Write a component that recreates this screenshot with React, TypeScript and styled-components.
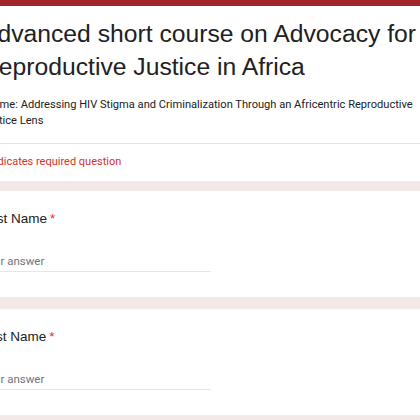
import styled, { createGlobalStyle } from 'styled-components';

const GlobalStyle = createGlobalStyle`
  html, body {
    margin: 0;
    padding: 0;
    background: #f3e9e9;
    overflow: hidden;
  }
`;

const FormColumn = styled.div`
  width: 496px;
  margin-left: -37px;
  display: flex;
  flex-direction: column;
`;

const Card = styled.div<{ $header?: boolean }>`
  background: #ffffff;
  margin-bottom: ${(p) => (p.$header ? '10px' : '12px')};
  border-top: ${(p) => (p.$header ? '6px solid #a1262b' : 'none')};
`;

const HeaderTop = styled.div`
  padding: 11px 18px 14px;
`;

const Title = styled.h1`
  margin: 0;
  font-family: 'Liberation Sans', Arial, sans-serif;
  font-weight: 400;
  font-size: 24.7px;
  line-height: 33px;
  color: #202124;
`;

const Description = styled.p`
  margin: 14px 0 0;
  font-family: Roboto, 'Noto Sans', sans-serif;
  font-size: 11.1px;
  line-height: 16px;
  color: #202124;
`;

const RequiredNote = styled.div`
  border-top: 1px solid #e3e3e3;
  padding: 10px 18px 12px;
  font-family: Roboto, 'Noto Sans', sans-serif;
  font-size: 11px;
  line-height: 15px;
  color: #d93025;
`;

const Question = styled.div`
  padding: 19px 18px 0;
  height: 87px;
`;

const Label = styled.div`
  font-family: 'Liberation Sans', Arial, sans-serif;
  font-size: 13.5px;
  line-height: 18px;
  color: #202124;
`;

const Star = styled.span`
  color: #d93025;
  margin-left: 3px;
`;

const AnswerInput = styled.input`
  display: block;
  box-sizing: border-box;
  width: 50%;
  margin-top: 25px;
  padding: 0 0 3px;
  border: none;
  border-bottom: 1px solid #e6e6e6;
  outline: none;
  background: transparent;
  font-family: Roboto, 'Noto Sans', sans-serif;
  font-size: 11.5px;
  line-height: 15px;
  height: 19px;
  color: #202124;

  &::placeholder {
    color: #70757a;
  }
`;

const questions = ['First Name', 'Last Name'];

export default function App() {
  return (
    <>
      <GlobalStyle />
      <FormColumn>
        <Card $header>
          <HeaderTop>
            <Title>Advanced short course on Advocacy for Reproductive Justice in Africa</Title>
            <Description>
              Theme: Addressing HIV Stigma and Criminalization Through an Africentric Reproductive
              Justice Lens
            </Description>
          </HeaderTop>
          <RequiredNote>* Indicates required question</RequiredNote>
        </Card>

        {questions.map((q) => (
          <Card key={q}>
            <Question>
              <Label>
                {q}
                <Star>*</Star>
              </Label>
              <AnswerInput type="text" placeholder="Your answer" />
            </Question>
          </Card>
        ))}
        <Card>
          <Question />
        </Card>
      </FormColumn>
    </>
  );
}
